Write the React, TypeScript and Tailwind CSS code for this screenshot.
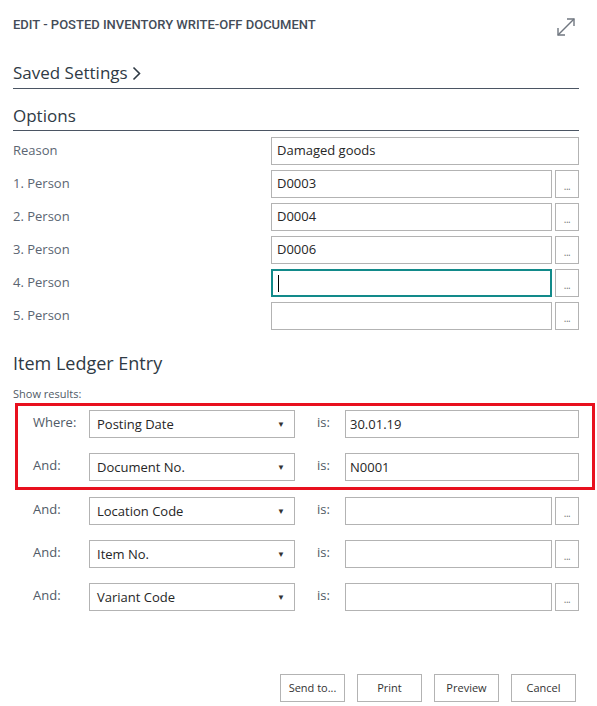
import React from "react";

const personRows = [
  { label: "1. Person", value: "D0003" },
  { label: "2. Person", value: "D0004" },
  { label: "3. Person", value: "D0006" },
  { label: "4. Person", value: "", focused: true },
  { label: "5. Person", value: "" },
];

const filterRows = [
  { label: "Where:", field: "Posting Date", value: "30.01.19", lookup: false, marked: true },
  { label: "And:", field: "Document No.", value: "N0001", lookup: false, marked: true },
  { label: "And:", field: "Location Code", value: "", lookup: true, marked: false },
  { label: "And:", field: "Item No.", value: "", lookup: true, marked: false },
  { label: "And:", field: "Variant Code", value: "", lookup: true, marked: false },
];

const ExpandIcon = () => (
  <svg width="22" height="22" viewBox="0 0 22 22" fill="none" stroke="#707780" strokeWidth="1.4">
    <path d="M3 19 L19 3" />
    <path d="M12 3 H19 V10" />
    <path d="M3 12 V19 H10" />
  </svg>
);

const LookupButton = () => (
  <div className="w-[24px] h-[28px] border border-[#b3b3b3] flex items-end justify-center pb-[6px] text-[10px] leading-none text-[#777] tracking-[-0.5px]">
    ...
  </div>
);

const FilterRow = ({ row }: { row: (typeof filterRows)[number] }) => (
  <div className="flex items-start h-[28px]">
    <div className="w-[56px] pt-[3px] text-[13px] text-[#505a66]">{row.label}</div>
    <div className="w-[206px] h-[28px] border border-[#b3b3b3] flex items-center justify-between pl-[7px] pr-[9px]">
      <span className="text-[13px] text-[#262626] pt-[1px]">{row.field}</span>
      <span className="text-[8px] text-[#333]">▼</span>
    </div>
    <div className="w-[50px] pl-[22px] pt-[3px] text-[13px] text-[#505a66]">is:</div>
    {row.lookup ? (
      <div className="flex gap-[3px]">
        <div className="w-[207px] h-[28px] border border-[#b3b3b3]" />
        <LookupButton />
      </div>
    ) : (
      <div className="w-[234px] h-[28px] border border-[#b3b3b3] flex items-center pl-[4px] text-[13px] text-[#262626] pt-[1px]">
        {row.value}
      </div>
    )}
  </div>
);

export default function App() {
  return (
    <div
      className="w-[597px] h-[706px] bg-white flex flex-col pl-[13px] pr-[18px] overflow-hidden"
      style={{ fontFamily: '"Open Sans", "Noto Sans", sans-serif' }}
    >
      {/* Header */}
      <div className="flex items-start justify-between pt-[17px] h-[52px]">
        <h1
          className="text-[13px] leading-[16px] font-medium uppercase text-[#444c58]"
          style={{ fontFamily: 'Roboto, "Liberation Sans", sans-serif' }}
        >
          Edit - Posted Inventory Write-off Document
        </h1>
        <div className="-mt-[1px] mr-[2px]">
          <ExpandIcon />
        </div>
      </div>

      {/* Saved Settings */}
      <div className="mt-[9px] border-b border-[#4b5563] pb-[3px] flex items-center gap-[4px] text-[17px] leading-[24px] text-[#2f3a45]">
        <span>Saved Settings</span>
        <svg width="9" height="15" viewBox="0 0 9 15" fill="none" stroke="#2f3a45" strokeWidth="1.6">
          <path d="M1.5 1.5 L7.5 7.5 L1.5 13.5" />
        </svg>
      </div>

      {/* Options */}
      <div className="mt-[15px] border-b border-[#4b5563] pb-[2px] text-[17px] leading-[24px] text-[#2f3a45]">
        Options
      </div>
      <div className="mt-[6px] flex flex-col gap-[5px]">
        <div className="flex items-center h-[28px]">
          <div className="w-[258px] text-[13px] text-[#5b6572]">Reason</div>
          <div className="flex-1 h-[28px] border border-[#b3b3b3] flex items-center pl-[5px] text-[13px] text-[#262626]">
            Damaged goods
          </div>
        </div>
        {personRows.map((p) => (
          <div key={p.label} className="flex items-center h-[28px]">
            <div className="w-[258px] text-[13px] text-[#5b6572]">{p.label}</div>
            <div className="flex-1 flex gap-[3px]">
              <div
                className={`flex-1 h-[28px] flex items-center pl-[5px] text-[13px] text-[#262626] ${
                  p.focused ? "border-2 border-[#128a8a]" : "border border-[#b3b3b3]"
                }`}
              >
                {p.focused ? <span className="w-px h-[17px] bg-black" /> : p.value}
              </div>
              <LookupButton />
            </div>
          </div>
        ))}
      </div>

      {/* Item Ledger Entry */}
      <div className="mt-[21px] text-[18px] leading-[24px] text-[#2f3a45]">Item Ledger Entry</div>
      <div className="mt-[12px] text-[11px] leading-[14px] text-[#505a66]">Show results:</div>

      <div className="mt-[2px] ml-[2px] -mr-[16px] border-[3px] border-[#e8101e] pt-[4px] pb-[6px] pl-[15px] flex flex-col gap-[15px]">
        {filterRows
          .filter((r) => r.marked)
          .map((r) => (
            <FilterRow key={r.field} row={r} />
          ))}
      </div>
      <div className="mt-[7px] pl-[20px] flex flex-col gap-[15px]">
        {filterRows
          .filter((r) => !r.marked)
          .map((r) => (
            <FilterRow key={r.field} row={r} />
          ))}
      </div>

      {/* Footer buttons */}
      <div className="mt-auto mb-[4px] mr-[3px] flex justify-end gap-[12px]">
        {["Send to...", "Print", "Preview", "Cancel"].map((b) => (
          <button
            key={b}
            className="w-[65px] h-[28px] border border-[#b3b3b3] bg-white text-[11px] text-[#333]"
          >
            {b}
          </button>
        ))}
      </div>
    </div>
  );
}
